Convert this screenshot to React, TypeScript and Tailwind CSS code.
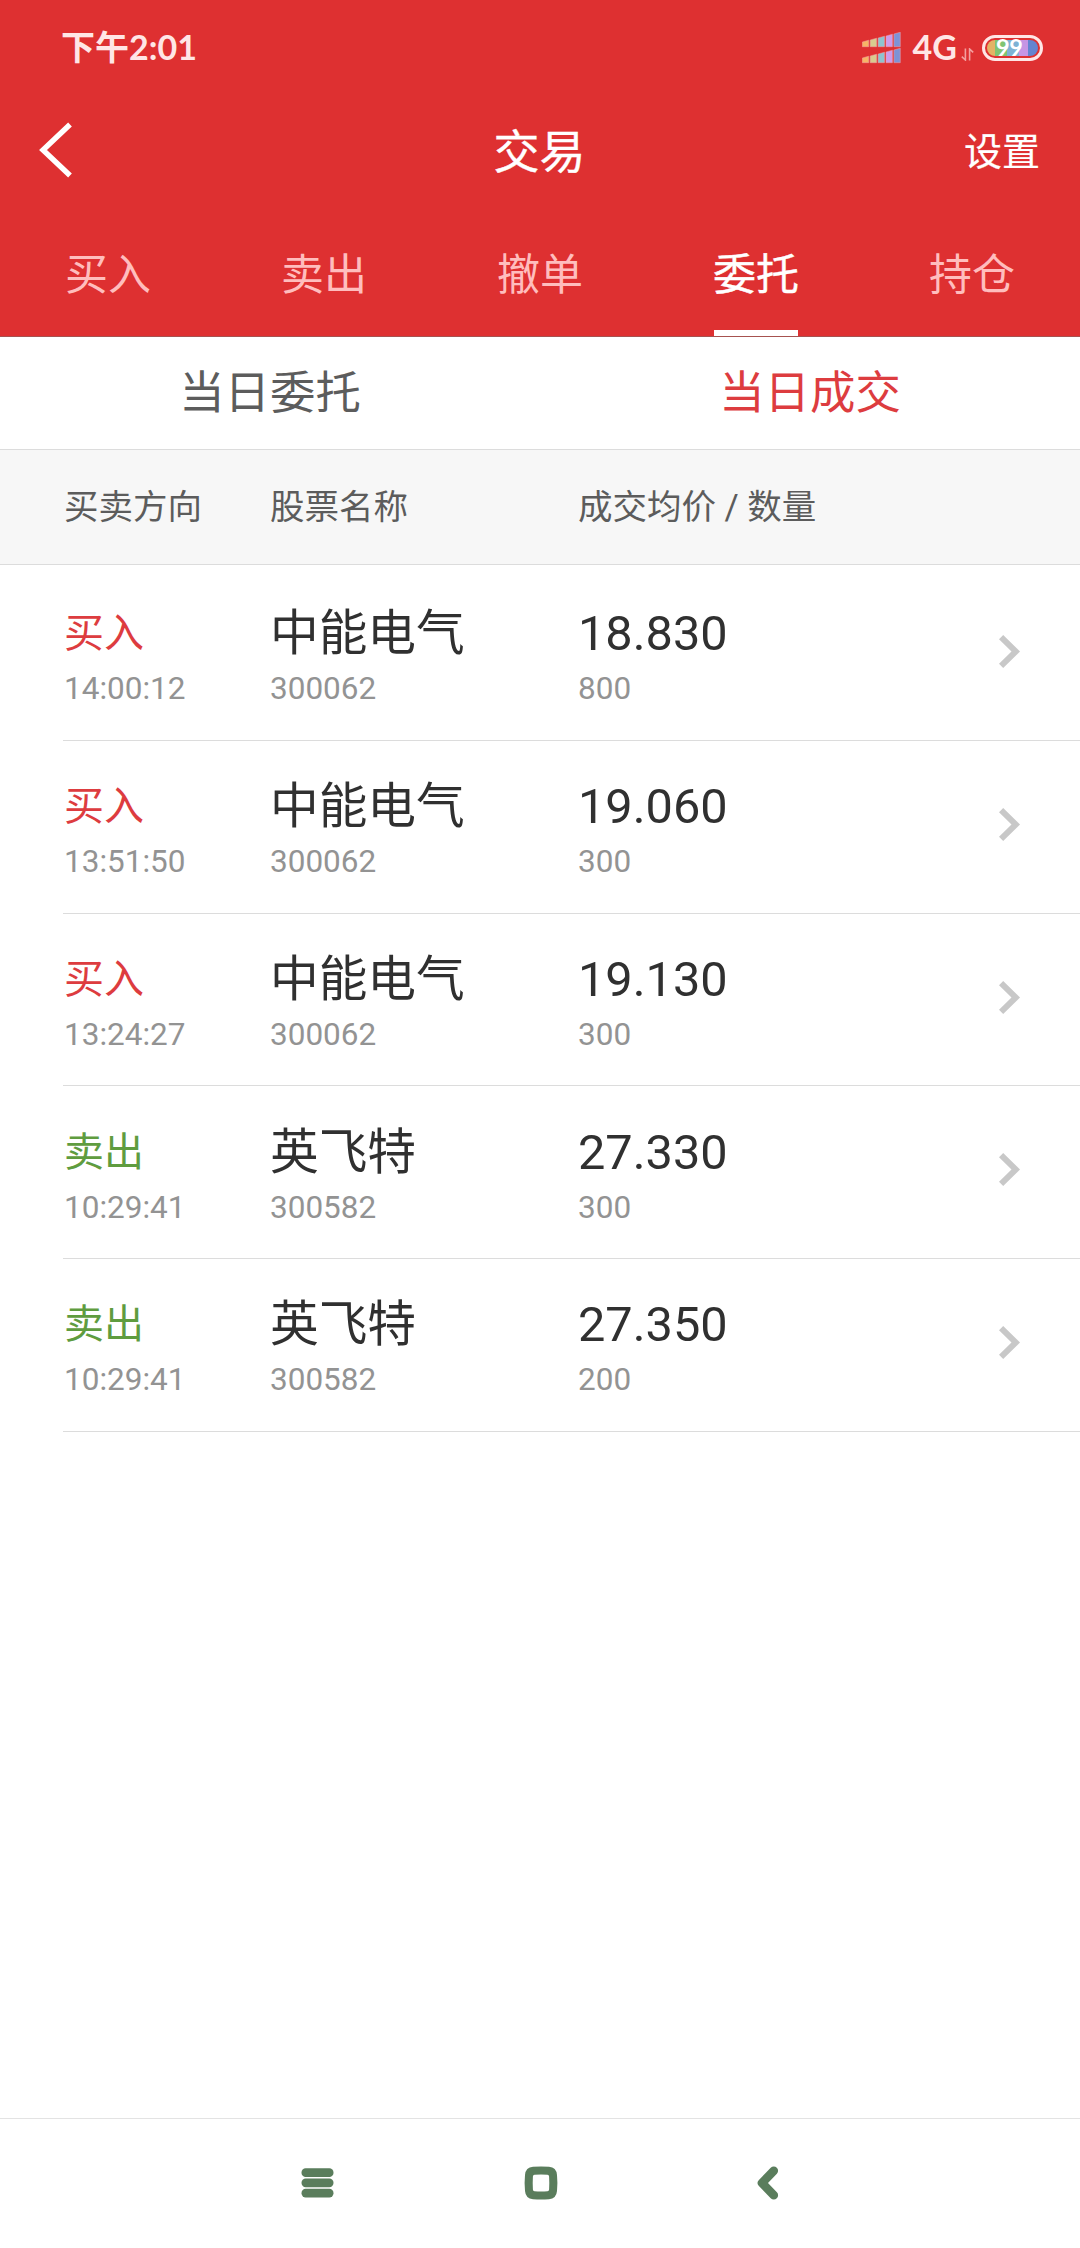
import clsx from 'clsx'

type Trade = {
  side: 'buy' | 'sell'
  time: string
  name: string
  code: string
  price: string
  volume: string
}

const tabs = ['买入', '卖出', '撤单', '委托', '持仓']
const activeTab = '委托'

const trades: Trade[] = [
  { side: 'buy',  time: '14:00:12', name: '中能电气', code: '300062', price: '18.830', volume: '800' },
  { side: 'buy',  time: '13:51:50', name: '中能电气', code: '300062', price: '19.060', volume: '300' },
  { side: 'buy',  time: '13:24:27', name: '中能电气', code: '300062', price: '19.130', volume: '300' },
  { side: 'sell', time: '10:29:41', name: '英飞特',   code: '300582', price: '27.330', volume: '300' },
  { side: 'sell', time: '10:29:41', name: '英飞特',   code: '300582', price: '27.350', volume: '200' },
]

const signalColors = ['#f7b566', '#d9cb8e', '#8fc3cf', '#cf9bea', '#7d93d6']

function SignalIcon() {
  return (
    <svg width="40" height="32" viewBox="0 0 40 32">
      {signalColors.map((color, i) => (
        <g key={color} fill={color} stroke="#f0a3a8" strokeWidth="0.5">
          <path d={`M${i * 7.9 + 0.3} ${10 - i * 2}l6.4 -1.8V14.7h-6.4z`} />
          <path d={`M${i * 7.9 + 0.3} ${26 - i * 2}l6.4 -1.8V30.7h-6.4z`} />
        </g>
      ))}
    </svg>
  )
}

function StatusBar() {
  return (
    <div className="flex h-[96px] items-center justify-between pl-[61px] pr-[37px] text-[#ffe6e6]">
      <span className="-mt-[2px] font-['Lato','Noto_Sans_CJK_SC',sans-serif] text-[34px] font-bold leading-[48px]">下午2:01</span>
      <div className="flex items-center">
        <SignalIcon />
        <span className="-mt-[3px] ml-[11px] font-['Lato',sans-serif] text-[34px] font-bold leading-[48px]">4G</span>
        <svg className="ml-1 mt-3" width="13" height="13" viewBox="0 0 13 13" fill="none" stroke="#f3a0a0" strokeWidth="1.6">
          <path d="M4.4 0.5v11.5L0.8 8.6M8.6 12.5V1l3.6 3.4" />
        </svg>
        <div className="ml-2 flex h-[26px] w-[61px] rounded-full border-[3px] border-[#ffe6e6] p-[2px]">
          <div className="flex flex-1 overflow-hidden rounded-full">
            <span className="w-[8px] bg-[#e3b365]" />
            <span className="w-[12px] bg-[#7fc472]" />
            <span className="w-[12px] bg-[#7db2d4]" />
            <span className="w-[9px] bg-[#c695e4]" />
            <span className="flex-1 bg-[#6484d0]" />
          </div>
          <span className="absolute ml-[9px] -mt-[6px] font-['Lato',sans-serif] text-[23.5px] font-bold leading-[26px] tracking-[-0.5px] text-white">99</span>
        </div>
      </div>
    </div>
  )
}

function TitleBar() {
  return (
    <div className="grid h-[108px] grid-cols-3 items-center pl-[39px] pr-[40px] text-white">
      <svg width="34" height="56" viewBox="0 0 34 56" fill="none" stroke="currentColor" strokeWidth="5.4">
        <path d="M31 2.5L4 28l27 25.5" />
      </svg>
      <h1 className="pt-[3px] text-center text-[46px] leading-[60px] [-webkit-text-stroke:0.4px_white]">交易</h1>
      <span className="pt-[3px] text-right text-[38px] leading-[54px] [-webkit-text-stroke:0.2px_white]">设置</span>
    </div>
  )
}

function Tabs() {
  return (
    <nav className="grid h-[132px] grid-cols-5">
      {tabs.map((tab) => (
        <div key={tab} className="flex flex-col items-center justify-between">
          <span
            className={clsx(
              'mt-[39px] text-[43px] leading-[64px]',
              tab === activeTab ? 'text-white [-webkit-text-stroke:0.4px_white]' : 'text-[#ffbdbd]',
            )}
          >
            {tab}
          </span>
          {tab === activeTab && <span className="h-[6px] w-[84px] bg-white" />}
        </div>
      ))}
    </nav>
  )
}

function TradeRow({ trade }: { trade: Trade }) {
  return (
    <li className="ml-[63px] flex h-[172.75px] border-b border-[#dcdcdc]">
      <div className="w-[207px] pl-px pt-[36.3px]">
        <div
          className={clsx(
            'text-[40px] leading-[60px]',
            trade.side === 'buy' ? 'text-[#dd3c3f]' : 'text-[#5f9c3f]',
          )}
        >
          {trade.side === 'buy' ? '买入' : '卖出'}
        </div>
        <div className="text-[31.5px] leading-[50px] text-[#939393]">{trade.time}</div>
      </div>
      <div className="w-[308px] pt-[36.3px]">
        <div className="text-[48.7px] leading-[60px] text-[#303030]">{trade.name}</div>
        <div className="text-[31.5px] leading-[50px] text-[#939393]">{trade.code}</div>
      </div>
      <div className="flex-1 pt-[36.3px]">
        <div className="text-[48.7px] leading-[60px] text-[#303030]">{trade.price}</div>
        <div className="text-[31.5px] leading-[50px] text-[#939393]">{trade.volume}</div>
      </div>
      <svg className="mr-[60px] mt-[67px]" width="21" height="33" viewBox="0 0 21 33" fill="#c8c8c8">
        <path d="M0 4.2L4.2 0 21 16.5 4.2 33 0 28.8 12.5 16.5z" />
      </svg>
    </li>
  )
}

function SystemNav() {
  return (
    <footer className="flex h-[130px] items-center border-t border-[#e3e3e3] pb-px pl-[301px] text-[#5a7d5c]">
      <svg width="33" height="30" viewBox="0 0 33 30" fill="currentColor">
        <rect x="0.5" y="0.3" width="32" height="8.8" rx="4.2" />
        <rect x="0.5" y="10.5" width="32" height="8.8" rx="4.2" />
        <rect x="0.5" y="20.7" width="32" height="8.8" rx="4.2" />
      </svg>
      <svg className="ml-[190px]" width="34" height="34" viewBox="0 0 34 34" fill="currentColor" fillRule="evenodd">
        <path d="M9 0.8Q17 0 25 0.8Q32.4 1.4 33 9Q33.8 17 33 25Q32.4 32.6 25 33.2Q17 34 9 33.2Q1.6 32.6 1 25Q0.2 17 1 9Q1.6 1.4 9 0.8zM10.5 8.8Q9 8.9 8.9 10.5Q8.5 17 8.9 23.5Q9 25.1 10.5 25.2Q17 25.6 23.5 25.2Q25 25.1 25.1 23.5Q25.5 17 25.1 10.5Q25 8.9 23.5 8.8Q17 8.4 10.5 8.8z" />
      </svg>
      <svg className="ml-[199px]" width="22" height="34" viewBox="0 0 22 34" fill="none" stroke="currentColor" strokeWidth="8.6" strokeLinecap="round" strokeLinejoin="round">
        <path d="M16.8 4.8L5 17l11.8 12.2" />
      </svg>
    </footer>
  )
}

export default function App() {
  return (
    <div className="flex h-[2248px] w-[1080px] flex-col bg-white font-['Roboto','Noto_Sans_CJK_SC',sans-serif]">
      <header className="h-[337px] border-b border-[#a65250] bg-[#de3031]">
        <StatusBar />
        <TitleBar />
        <Tabs />
      </header>

      <div className="grid h-[113px] grid-cols-2 border-b border-[#dcdcdc] pt-[24px] text-center text-[45.4px] leading-[66px]">
        <span className="text-[#5c5c5c]">当日委托</span>
        <span className="text-[#dd3c3f]">当日成交</span>
      </div>

      <div className="flex h-[115px] border-b border-[#dcdcdc] bg-[#f7f7f7] pl-[64px] pt-[32px] text-[34.5px] leading-[50px] text-[#5c5c5c]">
        <span className="w-[206px]">买卖方向</span>
        <span className="w-[308px]">股票名称</span>
        <span>成交均价 / 数量</span>
      </div>

      <ul className="flex-1 pt-[3.2px]">
        {trades.map((trade, i) => (
          <TradeRow key={i} trade={trade} />
        ))}
      </ul>

      {/* bottom system buttons */}
      <SystemNav />
    </div>
  )
}
